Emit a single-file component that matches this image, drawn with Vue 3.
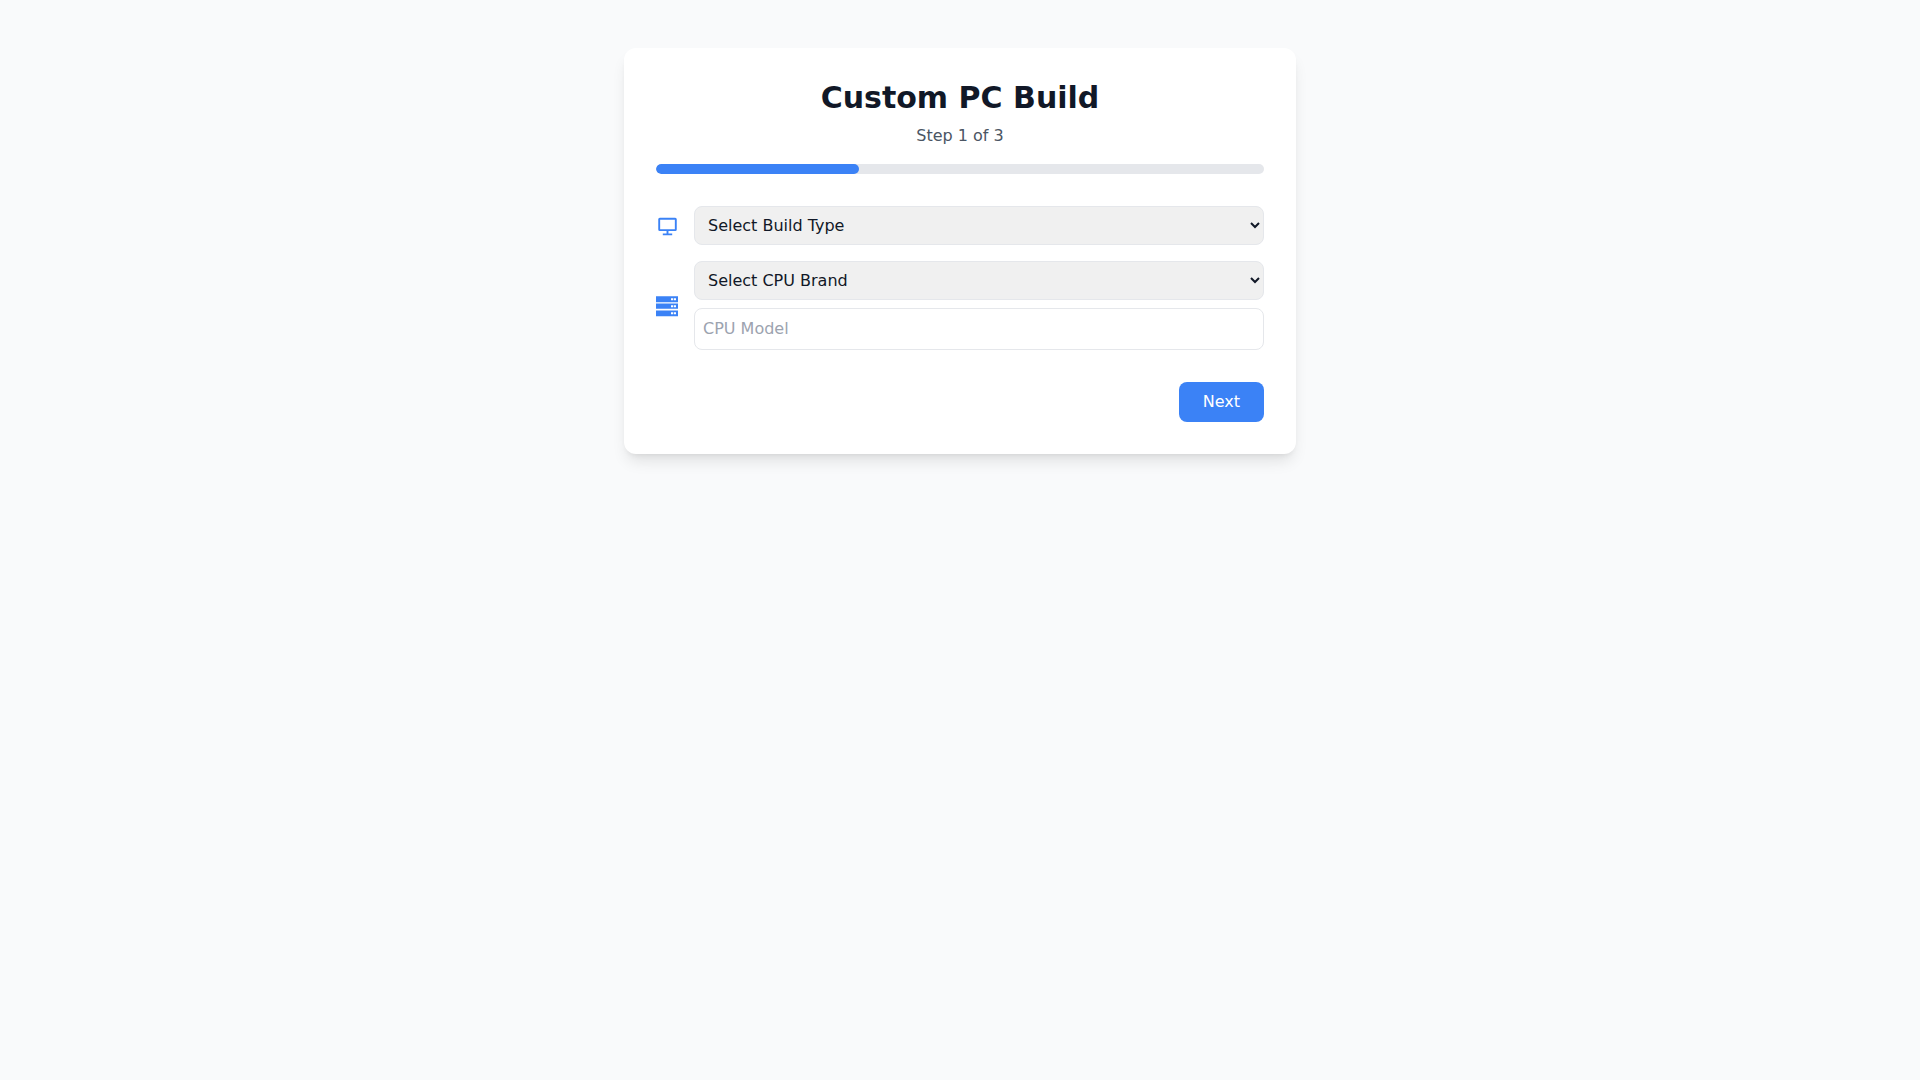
<script setup>
import { ref } from 'vue'

const buildType = ref('')
const cpuBrand = ref('')
const cpuModel = ref('')
const progress = ref(33.3333)
</script>

<template>
  <div class="page">
    <div class="card">
      <h1 class="title">Custom PC Build</h1>
      <p class="step">Step 1 of 3</p>
      <div class="track">
        <div class="fill" :style="{ width: progress + '%' }"></div>
      </div>

      <div class="row">
        <svg class="icon" viewBox="0 0 22 22" fill="none" stroke="#3b82f6" stroke-width="1.9">
          <rect x="3.2" y="3.700" width="16.600" height="11.400" rx="0.6" />
          <path d="M11.500 15.800v3.600M6.800 19.400h9.400" />
        </svg>
        <div class="fields">
          <select v-model="buildType" class="select">
            <option value="">Select Build Type</option>
            <option value="gaming">Gaming</option>
            <option value="workstation">Workstation</option>
          </select>
        </div>
      </div>

      <div class="row">
        <svg class="icon" viewBox="0 0 22 22">
          <path fill="#3b82f6" fill-rule="evenodd" d="M0 1.200h22v6H0zM0 8.500h22v5.300H0zM0 15.500h22v5.700H0zM15 3.200v2h2.300v-2zM18 3.200v2h2v-2zM15 10.200v2h2.300v-2zM18 10.200v2h2v-2zM15 17.300v2h2.300v-2zM18 17.300v2h2v-2z" />
        </svg>
        <div class="fields">
          <select v-model="cpuBrand" class="select">
            <option value="">Select CPU Brand</option>
            <option value="intel">Intel</option>
            <option value="amd">AMD</option>
          </select>
          <input v-model="cpuModel" class="input" type="text" placeholder="CPU Model" />
        </div>
      </div>

      <div class="actions">
        <button class="next" type="button">Next</button>
      </div>
    </div>
  </div>
</template>

<style>
body {
  background: #f9fafb;
}
</style>

<style scoped>
.page {
  min-height: 1080px;
  padding-top: 48px;
  box-sizing: border-box;
  font-family: "DejaVu Sans", sans-serif;
}

.card {
  width: 672px;
  margin: 0 auto;
  padding: 32px;
  box-sizing: border-box;
  background: #fff;
  border-radius: 12px;
  box-shadow: 0 10px 15px -3px rgba(0, 0, 0, 0.1), 0 4px 6px -4px rgba(0, 0, 0, 0.1);
}

.title {
  margin: 0 0 8px;
  font-size: 30px;
  line-height: 36px;
  font-weight: 700;
  color: #111827;
  text-align: center;
}

.step {
  margin: 0 0 16px;
  font-size: 16px;
  line-height: 24px;
  color: #4b5563;
  text-align: center;
}

.track {
  height: 10px;
  margin-bottom: 32px;
  background: #e5e7eb;
  border-radius: 9999px;
  overflow: hidden;
}

.fill {
  height: 100%;
  background: #3b82f6;
  border-radius: 9999px;
}

.row {
  display: flex;
  align-items: center;
  gap: 16px;
  margin-bottom: 16px;
}

.icon {
  width: 22px;
  height: 22px;
  flex: none;
}

.fields {
  flex: 1;
  display: flex;
  flex-direction: column;
  gap: 8px;
}

.select {
  width: 100%;
  height: 39px;
  padding: 8px 8px 8px 9px;
  box-sizing: border-box;
  font-family: inherit;
  font-size: 16px;
  color: #111827;
  background: #f0f0f0;
  border: 1px solid #e5e7eb;
  border-radius: 8px;
}

.input {
  width: 100%;
  height: 42px;
  padding: 7px 8px 9px;
  box-sizing: border-box;
  font-family: inherit;
  font-size: 16px;
  background: #fff;
  border: 1px solid #e5e7eb;
  border-radius: 8px;
}

.input::placeholder {
  color: #9ca3af;
}

.actions {
  display: flex;
  justify-content: flex-end;
  margin-top: 32px;
}

.next {
  padding: 7px 24px 9px;
  height: 40px;
  font-family: inherit;
  font-size: 16px;
  color: #fff;
  background: #3b82f6;
  border: none;
  border-radius: 8px;
}
</style>
